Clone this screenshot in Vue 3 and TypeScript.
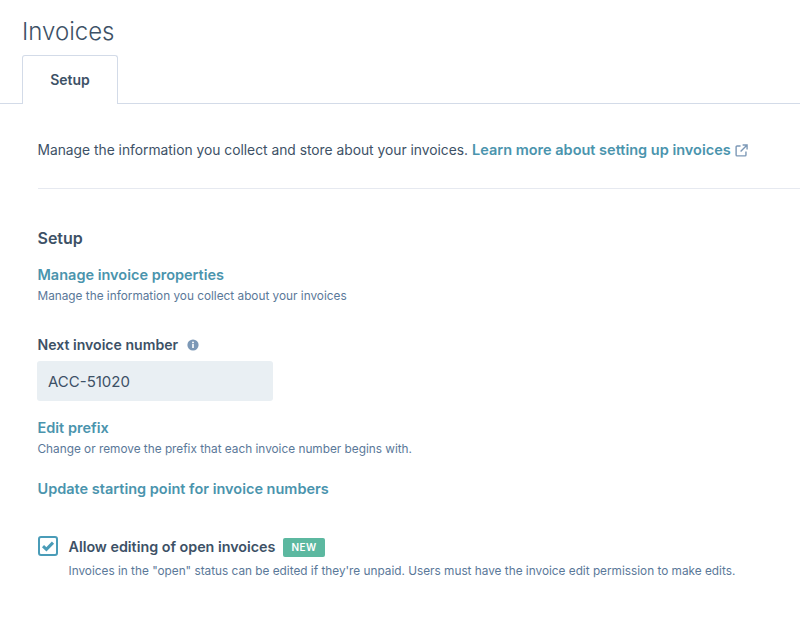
<script setup lang="ts">
const title = 'Invoices'
</script>

<template>
  <div class="page">
    <h1 class="title">{{ title }}</h1>
    <div class="tabs">
      <div class="tab">Setup</div>
    </div>
    <div class="body">
      <p class="intro">
        <span>Manage the information you collect and store about your invoices.</span>
        <a class="link">Learn more about setting up invoices</a>
        <svg class="ext" viewBox="0 0 14 14" width="13" height="13" fill="none" stroke="#7c98b6" stroke-width="1.5">
          <path d="M6 2.2H2.2a1 1 0 0 0-1 1v8.6a1 1 0 0 0 1 1h8.6a1 1 0 0 0 1-1V8" />
          <path d="M8.2 1h4.8v4.8M13 1 6 8" />
        </svg>
      </p>
      <div class="rule"></div>
      <h2 class="section">Setup</h2>
      <a class="link block props">Manage invoice properties</a>
      <p class="help">Manage the information you collect about your invoices</p>
      <div class="label">
        <span>Next invoice number</span>
        <svg viewBox="0 0 12 12" width="12" height="12">
          <circle cx="6" cy="6" r="5.6" fill="#7c98b6" />
          <rect x="5.2" y="5" width="1.6" height="4" fill="#fff" />
          <circle cx="6" cy="3.4" r="0.95" fill="#fff" />
        </svg>
      </div>
      <div class="field">ACC-51020</div>
      <a class="link block prefix">Edit prefix</a>
      <p class="help">Change or remove the prefix that each invoice number begins with.</p>
      <a class="link block start">Update starting point for invoice numbers</a>
      <div class="check-row">
        <span class="box">
          <svg viewBox="0 0 14 14" width="14" height="14" fill="none" stroke="#4a9cb8" stroke-width="3">
            <path d="M2 7.2 5.4 10.4 12 3.6" />
          </svg>
        </span>
        <div class="check-text">
          <div class="check-title">
            <span>Allow editing of open invoices</span>
            <span class="badge">NEW</span>
          </div>
          <p class="help">Invoices in the "open" status can be edited if they're unpaid. Users must have the invoice edit permission to make edits.</p>
        </div>
      </div>
    </div>
  </div>
</template>

<style>
html, body { background: #fff; }
</style>

<style scoped>
.page {
  width: 800px;
  height: 617px;
  overflow: hidden;
  font-family: "Inter", "Lato", sans-serif;
  color: #3d5166;
  background: #fff;
}
.title {
  margin: 0;
  padding: 15px 0 0 22px;
  height: 40px;
  box-sizing: content-box;
  font-size: 24px;
  line-height: 34px;
  font-weight: 300;
  color: #3d5166;
}
.tabs {
  height: 48px;
  padding-left: 22px;
  border-bottom: 1px solid #d3dbe8;
  display: flex;
}
.tab {
  width: 96px;
  height: 49px;
  box-sizing: border-box;
  padding-bottom: 1px;
  border: 1px solid #d3dbe8;
  border-bottom: 0;
  border-radius: 3px 3px 0 0;
  background: #fff;
  display: flex;
  align-items: center;
  justify-content: center;
  font-size: 14px;
  font-weight: 600;
  margin-bottom: -1px;
}
.body { padding-left: 37.5px; }
.intro {
  margin: 0;
  padding-top: 36px;
  display: flex;
  align-items: center;
  font-size: 13.8px;
  line-height: 20px;
  white-space: nowrap;
}
.link {
  color: #4a94ad;
  font-weight: 600;
  font-size: 14.5px;
  line-height: 20px;
}
.intro .link { margin-left: 4px; }
.ext { margin-left: 4px; }
.rule {
  height: 1px;
  margin-top: 28px;
  background: #e6e9f0;
}
.section {
  margin: 39px 0 0;
  font-size: 16px;
  line-height: 20px;
  font-weight: 600;
}
.block { display: block; }
.props { margin-top: 17px; }
.help {
  margin: 3px 0 0;
  font-size: 11.8px;
  line-height: 16px;
  color: #5a7899;
}
.label {
  margin-top: 32px;
  display: flex;
  align-items: center;
  gap: 9px;
  font-size: 14.1px;
  line-height: 18px;
  font-weight: 600;
}
.field {
  margin-top: 7px;
  margin-left: -0.5px;
  width: 236px;
  height: 40px;
  box-sizing: border-box;
  padding-left: 11px;
  display: flex;
  align-items: center;
  background: #e9eff3;
  border-radius: 3px;
  font-size: 15px;
}
.prefix { margin-top: 17px; }
.start { margin-top: 22px; }
.check-row {
  margin-top: 37px;
  display: flex;
  gap: 11px;
}
.box {
  width: 20px;
  height: 20px;
  box-sizing: border-box;
  border: 2px solid #4a9cb8;
  border-radius: 3px;
  display: flex;
  align-items: center;
  justify-content: center;
  flex: none;
}
.check-title {
  display: flex;
  align-items: center;
  gap: 8px;
  font-size: 14.3px;
  font-weight: 600;
  line-height: 20px;
  padding-top: 1px;
}
.badge {
  background: #5cb8a0;
  color: #fff;
  font-size: 10px;
  font-weight: 600;
  letter-spacing: 0.5px;
  line-height: 19px;
  padding: 0 8px;
  border-radius: 2px;
}
.check-text .help { margin-top: 6px; }
</style>
